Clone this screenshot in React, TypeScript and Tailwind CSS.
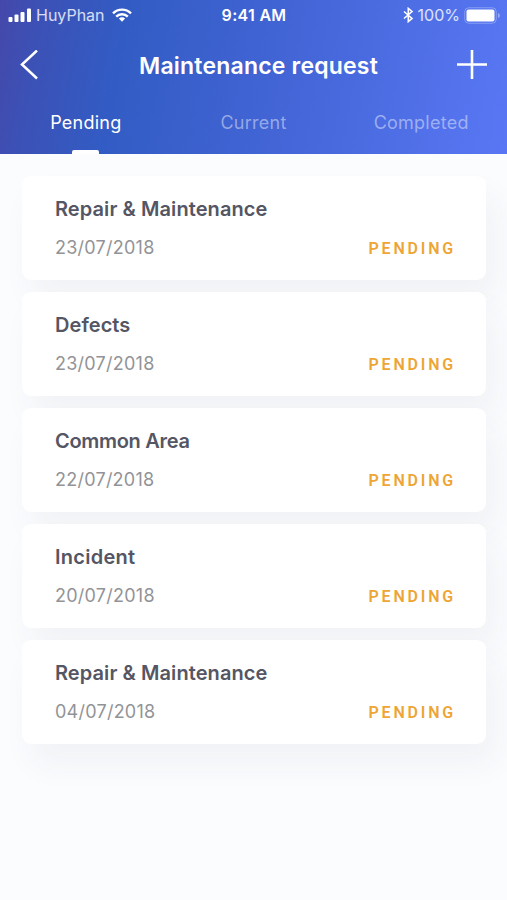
import React, { useState } from "react";

const tabs = ["Pending", "Current", "Completed"];

const requests: Request[] = [
  { id: 1, title: "Repair & Maintenance", date: "23/07/2018", spacing: "tracking-[0.08px]" },
  { id: 2, title: "Defects", date: "23/07/2018", spacing: "tracking-[0.06px]" },
  { id: 3, title: "Common Area", date: "22/07/2018", spacing: "tracking-[-0.3px]" },
  { id: 4, title: "Incident", date: "20/07/2018", spacing: "tracking-[0.25px]" },
  { id: 5, title: "Repair & Maintenance", date: "04/07/2018", spacing: "tracking-[0.08px]" },
];

const StatusBar: React.FC = () => (
  <div className="grid h-[30px] grid-cols-3 items-center pl-2 pr-[7px] text-[16px] leading-none text-white">
    <div className="flex items-center">
      <svg width="24" height="14" viewBox="0 0 24 14" fill="currentColor">
        <rect x="0.5" y="9" width="4" height="5" rx="1" />
        <rect x="6.5" y="6.5" width="4" height="7.5" rx="1" />
        <rect x="12.5" y="4" width="4" height="10" rx="1" />
        <rect x="19" y="0.5" width="4" height="13.5" rx="1" />
      </svg>
      <span className="ml-1 text-white/80">HuyPhan</span>
      <svg className="ml-[7px]" width="20" height="14" viewBox="0 0 20 14" fill="none" stroke="currentColor" strokeWidth="2.4">
        <path d="M1 5.3a12.8 12.8 0 0 1 18 0" />
        <path d="M4.2 8.6a8.2 8.2 0 0 1 11.6 0" />
        <path d="M10 13.7 6.9 10.6a4.4 4.4 0 0 1 6.2 0z" fill="currentColor" stroke="none" />
      </svg>
    </div>
    <span className="text-center font-semibold tracking-[0.3px]">9:41 AM</span>
    <div className="flex items-center justify-end">
      <svg width="11" height="16" viewBox="0 0 11 16" fill="none" stroke="currentColor" strokeWidth="1.6">
        <path d="M1 4.5 9 11.5 5.3 14.6V1.4L9 4.5 1 11.5" />
      </svg>
      <span className="ml-1 text-white/80">100%</span>
      <svg className="ml-1" width="36" height="17" viewBox="0 0 36 17" fill="none">
        <rect x="0.75" y="0.75" width="31.5" height="15.5" rx="4" stroke="white" strokeOpacity="0.3" />
        <rect x="2.5" y="2.5" width="28" height="12" rx="2" fill="white" />
        <path d="M34 6v5c1.4-.6 1.8-1.4 1.8-2.5S35.4 6.6 34 6z" fill="white" fillOpacity="0.4" />
      </svg>
    </div>
  </div>
);

const RequestCard: React.FC<{ request: Request }> = ({ request }) => (
  <li className="h-[104px] rounded-[9px] bg-white pl-[33px] pr-[30px] pt-[21px] shadow-[10px_20px_32px_rgba(40,50,80,0.05)]">
    <h2 className={`text-[20px] font-semibold leading-6 text-[#555664] ${request.spacing}`}>
      {request.title}
    </h2>
    <div className="mt-[15px] flex items-center justify-between">
      <span className="text-[18px] leading-6 tracking-[0.25px] text-[#929397]">{request.date}</span>
      <span className="pt-0.5 font-['Roboto',sans-serif] text-[16px] font-semibold leading-5 tracking-[2.8px] text-[#eda535]">
        PENDING
      </span>
    </div>
  </li>
);

export default function App() {
  const [activeTab, setActiveTab] = useState("Pending");

  return (
    <div className="h-[900px] w-[507px] overflow-hidden bg-[#fbfcfe] font-['Inter',sans-serif]">
      <header className="h-[154px] bg-[linear-gradient(100deg,#4548aa_0%,#3c51b6_8%,#325cc4_24%,#4365d6_56%,#5977f4_100%)]">
        <StatusBar />
        <div className="flex h-[70px] items-center justify-between px-5 text-white">
          <button aria-label="Back" className="w-10">
            <svg width="30" height="30" viewBox="0 0 30 30" fill="none" stroke="currentColor" strokeWidth="2.5">
              <path d="M17 0.5 2 14.5l15 14" />
            </svg>
          </button>
          <h1 className="pt-0.5 text-[23px] font-semibold tracking-[0.2px]">Maintenance request</h1>
          <button aria-label="Add request">
            <svg width="30" height="30" viewBox="0 0 30 30" fill="none" stroke="currentColor" strokeWidth="2.6">
              <path d="M15 0v29M0 14.5h30" />
            </svg>
          </button>
        </div>
        <nav className="grid h-[54px] grid-cols-3 px-0.5">
          {tabs.map(tab => (
            <button
              key={tab}
              onClick={() => setActiveTab(tab)}
              className={`flex flex-col items-center justify-between pt-[11px] text-[18px] leading-6 tracking-[0.25px] ${
                activeTab === tab ? "text-white" : "text-white/45"
              }`}
            >
              {tab}
              {activeTab === tab && (
                <span className="h-1 w-[27px] rounded-t-[2px] bg-white" />
              )}
            </button>
          ))}
        </nav>
      </header>
      <ul className="flex flex-col gap-3 pl-[22px] pr-[21px] pt-[22px]">
        {requests.map(request => (
          <RequestCard key={request.id} request={request} />
        ))}
      </ul>
    </div>
  );
}

type Request = {
  id: number;
  title: string;
  date: string;
  spacing: string;
};
